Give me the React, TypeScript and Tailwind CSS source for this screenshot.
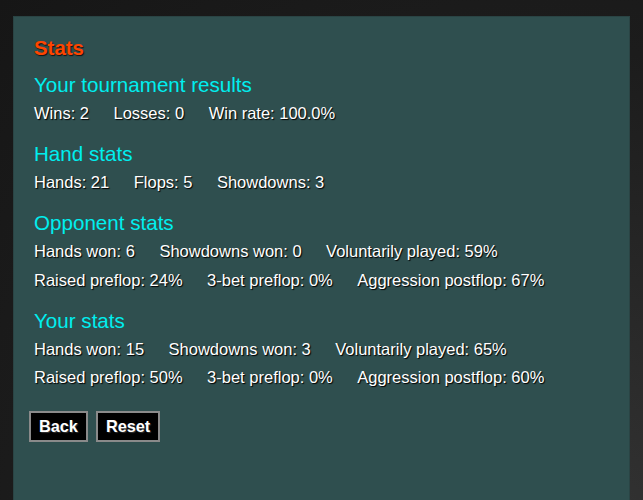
const opponentStats = [
  "Hands won: 6",
  "Showdowns won: 0",
  "Voluntarily played: 59%",
  "Raised preflop: 24%",
  "3-bet preflop: 0%",
  "Aggression postflop: 67%",
];

const yourStats = [
  "Hands won: 15",
  "Showdowns won: 3",
  "Voluntarily played: 65%",
  "Raised preflop: 50%",
  "3-bet preflop: 0%",
  "Aggression postflop: 60%",
];

function Section({ title, items, first }: { title: string; items: string[]; first?: boolean }) {
  return (
    <section className={first ? "mt-[13px]" : "mt-5"}>
      <h2 className="text-[20.6px] leading-[23px] text-[#00eeee]">{title}</h2>
      <div className="mt-2 flex flex-wrap gap-x-[24.5px] gap-y-[10.5px] text-[16.5px] leading-[18px] text-white [text-shadow:1px_1px_1px_#000]">
        {items.map(item => (
          <span key={item}>{item}</span>
        ))}
      </div>
    </section>
  );
}

export default function App() {
  return (
    <div
      className="min-h-screen overflow-hidden bg-[radial-gradient(ellipse_at_85%_110%,#363636_0%,#1c1c1c_65%,#161616_100%)] px-[13px] pt-4 font-['Liberation_Sans',Arial,sans-serif]"
    >
      <div className="min-h-[500px] border border-[#2a4444] bg-[#2f4f4f] px-[15px] pt-[20px] pb-10">
        <div className="pl-[5px]">
          <h1 className="text-[20.4px] font-bold leading-[23px] text-[#ff4500] [text-shadow:1px_1px_1px_#111]">
            Stats
          </h1>
          <Section title="Your tournament results" items={["Wins: 2", "Losses: 0", "Win rate: 100.0%"]} first />
          <Section title="Hand stats" items={["Hands: 21", "Flops: 5", "Showdowns: 3"]} />
          <Section title="Opponent stats" items={opponentStats} />
          <Section title="Your stats" items={yourStats} />
        </div>
        <div className="mt-[25px] flex gap-2">
          <button className="border-2 border-[#8a8a8a] bg-black px-2 py-1 text-[16.3px] font-bold leading-[19px] text-white [text-shadow:1px_1px_1px_#333]">
            Back
          </button>
          <button className="border-2 border-[#8a8a8a] bg-black px-2 py-1 text-[16.3px] font-bold leading-[19px] text-white [text-shadow:1px_1px_1px_#333]">
            Reset
          </button>
        </div>
      </div>
    </div>
  );
}
